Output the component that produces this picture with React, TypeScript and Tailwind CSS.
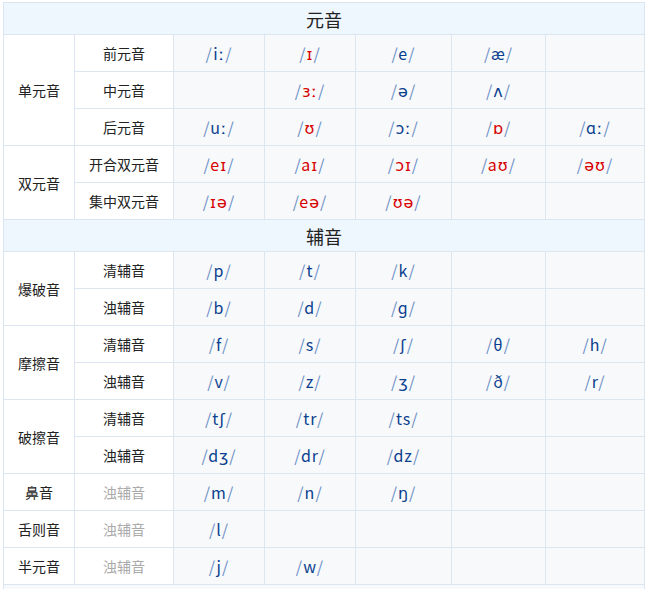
type Sym = { t: string; red?: boolean } | null;

const b = (t: string): Sym => ({ t });
const r = (t: string): Sym => ({ t, red: true });

type Row = { group?: string; span?: number; sub: string; subGray?: boolean; cells: Sym[] };

const vowels: Row[] = [
  { group: "单元音", span: 3, sub: "前元音", cells: [b("iː"), r("ɪ"), b("e"), b("æ"), null] },
  { sub: "中元音", cells: [null, r("ɜː"), b("ə"), b("ʌ"), null] },
  { sub: "后元音", cells: [b("uː"), r("ʊ"), b("ɔː"), r("ɒ"), b("ɑː")] },
  { group: "双元音", span: 2, sub: "开合双元音", cells: [r("eɪ"), r("aɪ"), r("ɔɪ"), r("aʊ"), r("əʊ")] },
  { sub: "集中双元音", cells: [r("ɪə"), r("eə"), r("ʊə"), null, null] },
];

const consonants: Row[] = [
  { group: "爆破音", span: 2, sub: "清辅音", cells: [b("p"), b("t"), b("k"), null, null] },
  { sub: "浊辅音", cells: [b("b"), b("d"), b("ɡ"), null, null] },
  { group: "摩擦音", span: 2, sub: "清辅音", cells: [b("f"), b("s"), b("ʃ"), b("θ"), b("h")] },
  { sub: "浊辅音", cells: [b("v"), b("z"), b("ʒ"), b("ð"), b("r")] },
  { group: "破擦音", span: 2, sub: "清辅音", cells: [b("tʃ"), b("tr"), b("ts"), null, null] },
  { sub: "浊辅音", cells: [b("dʒ"), b("dr"), b("dz"), null, null] },
  { group: "鼻音", span: 1, sub: "浊辅音", subGray: true, cells: [b("m"), b("n"), b("ŋ"), null, null] },
  { group: "舌则音", span: 1, sub: "浊辅音", subGray: true, cells: [b("l"), null, null, null, null] },
  { group: "半元音", span: 1, sub: "浊辅音", subGray: true, cells: [b("j"), b("w"), null, null, null] },
];

const bd = "border border-[#dce6f0]";

function Body({ rows }: { rows: Row[] }) {
  return (
    <>
      {rows.map((row, i) => (
        <tr key={i} className="h-[37px]">
          {row.group && (
            <td rowSpan={row.span} className={`${bd} bg-white text-center text-[#222]`}>
              {row.group}
            </td>
          )}
          <td className={`${bd} bg-white text-center ${row.subGray ? "text-[#aaa]" : "text-[#222]"}`}>{row.sub}</td>
          {row.cells.map((c, j) => (
            <td key={j} className={`${bd} bg-[#f8f9fa] text-center text-[16px] tracking-[1px]`}>
              {c && (
                <span>
                  <span className="text-[#6b8fc7]">/</span>
                  <span className={c.red ? "text-[#d60000]" : "text-[#0b3f8f]"}>{c.t}</span>
                  <span className="text-[#6b8fc7]">/</span>
                </span>
              )}
            </td>
          ))}
        </tr>
      ))}
    </>
  );
}

export default function App() {
  return (
    <div className="h-[589px] w-[646px] overflow-hidden bg-white pl-[3px] pt-[2px]" style={{ fontFamily: '"Noto Sans CJK SC", "DejaVu Sans", sans-serif' }}>
      <table className="w-[641px] table-fixed border-collapse text-[14px] leading-[20px]">
        <colgroup>
          <col className="w-[71px]" />
          <col className="w-[99px]" />
          <col className="w-[91px]" />
          <col className="w-[91px]" />
          <col className="w-[96px]" />
          <col className="w-[94px]" />
          <col className="w-[99px]" />
        </colgroup>
        <tbody>
          <tr className="h-[32px]">
            <td colSpan={7} className={`${bd} bg-[#eef6fe] text-center text-[18px] text-[#222]`}>元音</td>
          </tr>
          <Body rows={vowels} />
          <tr className="h-[32px]">
            <td colSpan={7} className={`${bd} bg-[#eef6fe] text-center text-[18px] text-[#222]`}>辅音</td>
          </tr>
          <Body rows={consonants} />
          <tr className="h-[37px]">
            <td colSpan={7} className={`${bd} bg-[#f8f9fa]`}></td>
          </tr>
        </tbody>
      </table>
    </div>
  );
}
